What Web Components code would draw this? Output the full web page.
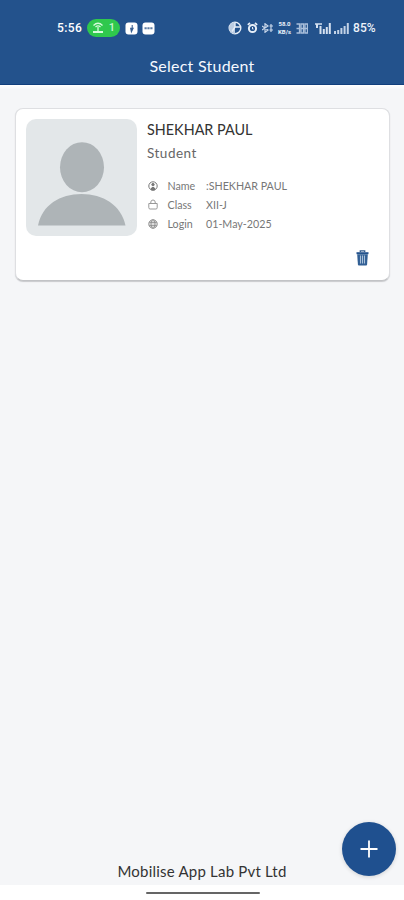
<!DOCTYPE html>
<html lang="en">
<head>
<meta charset="utf-8">
<meta name="viewport" content="width=device-width, initial-scale=1">
<title>Select Student</title>
<style>
    html, body {
        margin: 0;
        height: 100%;
        background: #fff;
    }
    body {
        --blue: #23528c;
        font-family: Lato, "Open Sans", sans-serif;
        overflow: hidden;
    }
</style>
</head>
<body>
<student-app></student-app>

<script>
class StatusBar extends HTMLElement {
    constructor(){
        super();
        this.shadow = this.attachShadow({mode: "open"});
        this.shadow.innerHTML =
        `
        <style>
            :host {
                display: flex;
                align-items: center;
                box-sizing: border-box;
                height: 56px;
                padding: 0 27px 0 57px;
                color: #eef4fb;
                font: 500 12px/16px Roboto, sans-serif;
            }
            svg { display: block; flex: none; }
            .time { width: 30px; color: #fff; letter-spacing: .4px; }
            .hotspot {
                display: flex;
                align-items: center;
                justify-content: center;
                gap: 5px;
                width: 33px;
                height: 18px;
                border-radius: 9px;
                background: #2fc84d;
                color: #c9f6d0;
                font-size: 11px;
            }
            .badges { display: flex; gap: 4px; margin-left: 5px; }
            .right { display: flex; align-items: center; margin-left: auto; }
            .speed {
                display: flex;
                flex-direction: column;
                align-items: center;
                width: 15px;
                margin: 0 4px 0 4px;
                font-size: 6px;
                line-height: 8px;
                font-weight: 700;
            }
            .percent { width: 24px; margin-left: 4px; letter-spacing: .1px; white-space: nowrap; }
        </style>
        <span class="time">5:56</span>
        <span class="hotspot">
            <svg width="12" height="12" viewBox="0 0 12 12" fill="none" stroke="#d6fadb" stroke-width="1.3">
                <path d="M1.5 3.5Q6-1 10.5 3.5M3.5 5Q6 2.700 8.5 5M6 5v4"/>
                <path d="M1 10h10" stroke-width="2"/>
            </svg>
            <span>1</span>
        </span>
        <span class="badges">
            <svg width="13" height="13" viewBox="0 0 13 13">
                <rect x=".5" y=".5" width="12" height="12" rx="3" fill="#fff"/>
                <path d="M7.2 3v3.5M5.7 6.2h2.4L6.4 9.7z" stroke="#385f91" stroke-width="1.1" fill="#385f91"/>
            </svg>
            <svg width="13" height="13" viewBox="0 0 13 13">
                <rect x=".5" y=".5" width="12" height="12" rx="3" fill="#fff"/>
                <path d="M2.5 6.2h8" stroke="#5e7da5" stroke-width="2" stroke-dasharray="2.2 .7"/>
            </svg>
        </span>
        <span class="right">
            <svg width="14" height="14" viewBox="0 0 14 14" fill="none" stroke="#e6eef8" stroke-width="1.4">
                <circle cx="7" cy="7" r="5.8"/>
                <path d="M7 1v12A6 6 0 0 1 7 1z" fill="#bccde2" stroke="none"/>
                <path d="M7 1.5V6h6M7 6L4 10.5"/>
            </svg>
            <svg style="margin-left:5px" width="11" height="12" viewBox="0 0 11 12" fill="none" stroke="#e6eef8">
                <circle cx="5.5" cy="6.5" r="3.6" stroke-width="2"/>
                <path d="M.8 2.8L3 1M10.2 2.8L8 1" stroke-width="1.7"/>
                <path d="M5.5 5v2h1"/>
            </svg>
            <svg style="margin-left:4px" width="11" height="10" viewBox="0 0 11 10" fill="none" stroke="#c7d6e9" stroke-width="1.2">
                <path d="M0 3l6 4-3 2.3V.7L6 3 0 7M7.5 3H11M7.5 7H11M9 1v8"/>
            </svg>
            <span class="speed"><span>58.0</span><span>KB/s</span></span>
            <svg width="12" height="11" viewBox="0 0 12 11" fill="none" stroke="#a9bfdb" stroke-width="1.3">
                <path d="M.5 1h3v9h-3M.5 5.5h3M5 1h2.5v9H5zM9 1h2.5v9H9zM5 5.5h6.5"/>
            </svg>
            <svg style="margin-left:7px" width="16" height="11" viewBox="0 0 16 11" stroke="#d5e1f0" stroke-width="2">
                <path d="M0 1h7" stroke-width="1.5"/>
                <path d="M2 1v4M5.5 11V3M8.8 11V6M11.8 11V4M14.8 11V0"/>
            </svg>
            <svg style="margin-left:3px" width="15" height="11" viewBox="0 0 15 11" stroke="#c3d3e7" stroke-width="2">
                <path d="M1 11V8M4.2 11V7M7.4 11V5M10.6 11V3M13.8 11V0"/>
            </svg>
            <span class="percent">85%</span>
        </span>
        `;
    }
}

class TopBar extends HTMLElement {
    constructor(){
        super();
        this.shadow = this.attachShadow({mode: "open"});
        this.shadow.innerHTML =
        `
        <style>
            :host {
                display: block;
                box-sizing: border-box;
                height: 85px;
                background: var(--blue);
                border-bottom: 1px solid #123f7c;
                flex: none;
            }
            h1 {
                margin: 0;
                color: #f5f9ff;
                font-size: 16px;
                line-height: 20px;
                font-weight: 400;
                letter-spacing: .25px;
                text-align: center;
            }
        </style>
        <status-bar></status-bar>
        <h1><slot></slot></h1>
        `;
    }
}

class InfoRow extends HTMLElement {
    constructor(){
        super();
        this.shadow = this.attachShadow({mode: "open"});
        this.shadow.innerHTML =
        `
        <style>
            :host {
                display: grid;
                grid-template-columns: 19.5px 38.5px auto;
                align-items: center;
                height: 19.3px;
                color: #777;
                font-size: 10.7px;
                line-height: 14px;
                white-space: nowrap;
            }
            ::slotted(svg) { display: block; }
        </style>
        <slot name="icon"></slot>
        <span>${this.getAttribute("label")}</span>
        <slot></slot>
        `;
    }
}

class StudentCard extends HTMLElement {
    constructor(){
        super();
        this.shadow = this.attachShadow({mode: "open"});
        this.shadow.innerHTML =
        `
        <style>
            :host {
                display: flex;
                flex-direction: column;
                box-sizing: border-box;
                width: 375px;
                height: 173px;
                padding: 10px 20px 0 10px;
                border: 1px solid #dedfe2;
                border-bottom-color: #c2c3c6;
                border-radius: 8px;
                background: #fff;
                box-shadow: 0 1px 1px #c9cacd;
            }
            .top { display: flex; gap: 10px; }
            .avatar { display: block; flex: none; }
            .details { padding-top: 1px; }
            h2 {
                margin: 0;
                color: #333;
                font-size: 14.4px;
                line-height: 20px;
                font-weight: 400;
                white-space: nowrap;
            }
            p {
                margin: 3px 0 13px;
                color: #666;
                font-size: 13.5px;
                line-height: 20px;
                letter-spacing: .5px;
            }
            .rows { padding-left: 1px; }
            button {
                display: block;
                align-self: flex-end;
                margin-top: 14px;
                padding: 0;
                border: 0;
                background: none;
            }
            button svg { display: block; }
        </style>
        <div class="top">
            <svg class="avatar" width="111" height="117" viewBox="0 0 111 117">
                <rect width="111" height="117" rx="10" fill="#e3e7e9"/>
                <ellipse cx="56" cy="48.2" rx="22" ry="25" fill="#aeb4b7"/>
                <path d="M12 106.5C16 86 34 75 55.5 75S95 86 99.5 106.5z" fill="#aeb4b7"/>
            </svg>
            <div class="details">
                <h2><slot name="name"></slot></h2>
                <p><slot name="role"></slot></p>
                <div class="rows"><slot></slot></div>
            </div>
        </div>
        <button aria-label="Delete">
            <svg width="13" height="16" viewBox="0 0 13 16">
                <path d="M4.3 2V.8h4.4V2" fill="none" stroke="#315b8c" stroke-width="1.3"/>
                <path d="M.5 2.2h12v2H.5z" fill="#23528c"/>
                <path d="M1.2 4.2h10.6l-.7 10.300q-.1 1-1 1H2.900q-.9 0-1-1z" fill="#315f94"/>
                <path d="M4.500 5.500v8M6.500 5.500v8M8.500 5.500v8" stroke="#a9c0d9" stroke-width="1.100"/>
            </svg>
        </button>
        `;
    }
}

class AddButton extends HTMLElement {
    constructor(){
        super();
        this.shadow = this.attachShadow({mode: "open"});
        this.shadow.innerHTML =
        `
        <style>
            :host {
                display: flex;
                align-items: center;
                justify-content: center;
                width: 54px;
                height: 54px;
                border-radius: 50%;
                background: #1f508f;
                box-shadow: 0 1px 4px rgba(0,0,0,.15);
            }
        </style>
        <svg width="18" height="18" viewBox="0 0 18 18" stroke="#fff" stroke-width="1.8">
            <path d="M9 .5v17M.5 9h17"/>
        </svg>
        `;
    }
}

class StudentApp extends HTMLElement {
    constructor(){
        super();
        this.shadow = this.attachShadow({mode: "open"});
        this.shadow.innerHTML =
        `
        <style>
            :host {
                display: flex;
                flex-direction: column;
                position: relative;
                height: 100vh;
            }
            main {
                flex: 1;
                display: flex;
                flex-direction: column;
                align-items: center;
                padding-top: 23px;
                background: linear-gradient(#fff 0, #f5f6f8 5px);
            }
            student-card { margin-left: 1px; }
            footer {
                margin-top: auto;
                padding-bottom: 4px;
                color: #333;
                font-size: 15px;
                line-height: 20px;
                letter-spacing: .21px;
            }
            .home {
                flex: none;
                display: flex;
                justify-content: center;
                align-items: center;
                height: 15px;
                background: #fff;
            }
            .home i {
                width: 114px;
                height: 2px;
                margin-left: 1px;
                border-radius: 1px;
                background: #656565;
            }
            add-button {
                position: absolute;
                right: 8px;
                bottom: 24px;
            }
        </style>
        <top-bar>Select Student</top-bar>
        <main>
            <student-card>
                <span slot="name">SHEKHAR PAUL</span>
                <span slot="role">Student</span>
                <info-row label="Name">
                    <svg slot="icon" width="10" height="10" viewBox="0 0 10 10" fill="none" stroke="#777">
                        <circle cx="5" cy="5" r="4.2"/>
                        <circle cx="5" cy="3.6" r="1.2" fill="#777"/>
                        <path d="M3.5 9V7q1.500-1.500 3 0v2z" fill="#777"/>
                    </svg>
                    <span>:SHEKHAR PAUL</span>
                </info-row>
                <info-row label="Class">
                    <svg slot="icon" width="10" height="11" viewBox="0 0 10 11" fill="none" stroke="#999">
                        <path d="M.8 4.5h8.4v4.2q0 1.300-1.300 1.300H2.100Q.8 10 .8 8.700zM2.800 4.500V3Q3 1 5 1t2.200 2v1.500"/>
                    </svg>
                    <span>XII-J</span>
                </info-row>
                <info-row label="Login">
                    <svg slot="icon" width="10" height="10" viewBox="0 0 10 10" fill="none" stroke="#888" stroke-width=".8">
                        <circle cx="5" cy="5" r="4.3" fill="#ddd"/>
                        <ellipse cx="5" cy="5" rx="2" ry="4.3"/>
                        <path d="M1.2 3.4h7.6M1.200 6.600h7.600"/>
                    </svg>
                    <span>01-May-2025</span>
                </info-row>
            </student-card>
            <footer>Mobilise App Lab Pvt Ltd</footer>
        </main>
        <div class="home"><i></i></div>
        <add-button role="button" aria-label="Add student"></add-button>
        `;
    }
}

customElements.define("status-bar", StatusBar);
customElements.define("top-bar", TopBar);
customElements.define("info-row", InfoRow);
customElements.define("student-card", StudentCard);
customElements.define("add-button", AddButton);
customElements.define("student-app", StudentApp);
</script>
</body>
</html>
